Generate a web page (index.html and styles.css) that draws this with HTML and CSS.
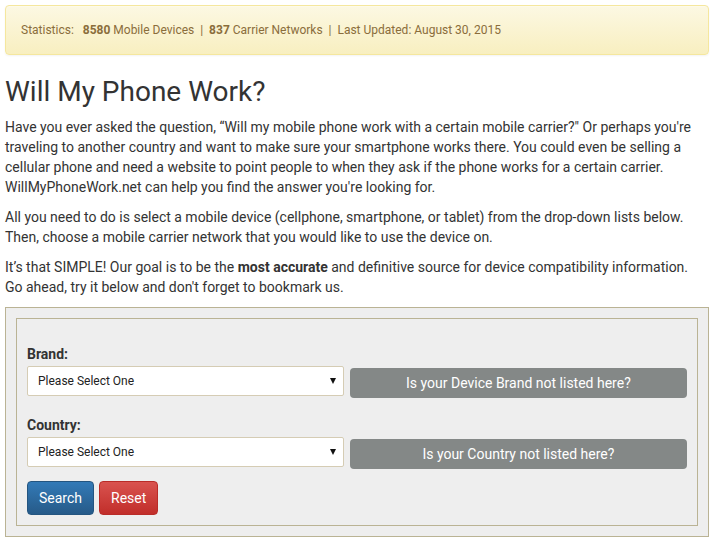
FILE: index.html
```html
<!DOCTYPE html>
<html lang="en">
<head>
  <meta charset="UTF-8">
  <meta name="viewport" content="width=device-width, initial-scale=1.0">
  <title>Will My Phone Work?</title>
  <link rel="stylesheet" href="styles.css">
</head>
<body>
  <div class="page">

    <!-- Stats bar -->
    <div class="stats-alert">
      Statistics:&nbsp;&nbsp; <b>8580</b> Mobile Devices&nbsp; | &nbsp;<b>837</b> Carrier Networks&nbsp; | &nbsp;Last Updated: August 30, 2015
    </div>

    <h1 class="page-title">Will My Phone Work?</h1>

    <p>Have you ever asked the question, &ldquo;Will my mobile phone work with a certain mobile carrier?" Or perhaps you're traveling to another country and want to make sure your smartphone works there. You could even be selling a cellular phone and need a website to point people to when they ask if the phone works for a certain carrier. WillMyPhoneWork.net can help you find the answer you're looking for.</p>

    <p>All you need to do is select a mobile device (cellphone, smartphone, or tablet) from the drop-down lists below. Then, choose a mobile carrier network that you would like to use the device on.</p>

    <p>It&rsquo;s that SIMPLE! Our goal is to be the <b>most accurate</b> and definitive source for device compatibility information. Go ahead, try it below and don't forget to bookmark us.</p>

    <!-- Search form -->
    <div class="search-box">
      <form class="search-form">
        <div class="form-group">
          <label for="brand">Brand:</label>
          <div class="form-row">
            <div class="select-wrap">
              <select id="brand"><option>Please Select One</option></select>
            </div>
            <button type="button" class="btn btn-grey">Is your Device Brand not listed here?</button>
          </div>
        </div>

        <div class="form-group form-group-last">
          <label for="country">Country:</label>
          <div class="form-row">
            <div class="select-wrap">
              <select id="country"><option>Please Select One</option></select>
            </div>
            <button type="button" class="btn btn-grey">Is your Country not listed here?</button>
          </div>
        </div>

        <div class="form-actions">
          <button type="button" class="btn btn-primary">Search</button>
          <button type="reset" class="btn btn-danger">Reset</button>
        </div>
      </form>
    </div>

  </div>
</body>
</html>
```

FILE: styles.css
```css
body {
  font-family: 'Roboto', 'Liberation Sans', sans-serif;
  font-size: 14px;
  line-height: 20px;
  color: #333;
  background: #fff;
  margin: 0;
  padding: 0;
}

.page {
  padding: 5px;
}

/* Stats bar */
.stats-alert {
  background: linear-gradient(to bottom, #fcf8e3 0%, #f8efc0 100%);
  border: 1px solid #f5e79e;
  border-radius: 4px;
  color: #8a6d3b;
  font-size: 12px;
  line-height: 18px;
  padding: 15px 15px;
  margin-bottom: 20px;
  box-shadow: inset 0 1px 0 rgba(255, 255, 255, 0.25), 0 1px 2px rgba(0, 0, 0, 0.05);
}

.page-title {
  font-size: 28px;
  font-weight: 400;
  line-height: 33px;
  margin: 20px 0 9px;
}

p {
  margin: 0 0 10px;
}

/* Search form */
.search-box {
  background: #eee;
  border: 1px solid #bab394;
  padding: 10px;
}

.search-form {
  border: 1px solid #bab394;
  padding: 25px 10px 10px;
}

.form-group {
  margin-bottom: 17px;
}

.form-group-last {
  margin-bottom: 12px;
}

.form-group label {
  display: block;
  font-weight: bold;
  margin-bottom: 2px;
}

.form-row {
  display: grid;
  grid-template-columns: 48% 1fr;
  gap: 6px;
  align-items: start;
}

.select-wrap {
  position: relative;
}

.select-wrap::after {
  content: "";
  position: absolute;
  right: 8px;
  top: 12px;
  border-left: 3.5px solid transparent;
  border-right: 3.5px solid transparent;
  border-top: 6px solid #111;
  pointer-events: none;
}

.select-wrap select {
  appearance: none;
  -webkit-appearance: none;
  width: 100%;
  height: 30px;
  background: #fff;
  border: 1px solid #d5ccb4;
  border-radius: 2px;
  padding: 0 10px;
  font-family: inherit;
  font-size: 12px;
  color: #222;
}

.btn {
  font-family: inherit;
  font-size: 14px;
  line-height: 20px;
  padding: 6px 11px;
  border-radius: 4px;
  border: 1px solid transparent;
  color: #fff;
  cursor: pointer;
}

.btn-grey {
  margin-top: 2px;
  height: 30px;
  padding: 4px 12px;
  background: #848887;
  border: none;
}

.form-actions {
  display: flex;
  gap: 5px;
}

.btn-primary {
  background: linear-gradient(to bottom, #337ab7 0%, #265a88 100%);
  border-color: #245580;
}

.btn-danger {
  background: linear-gradient(to bottom, #d9534f 0%, #c12e2a 100%);
  border-color: #b92c28;
}
```
